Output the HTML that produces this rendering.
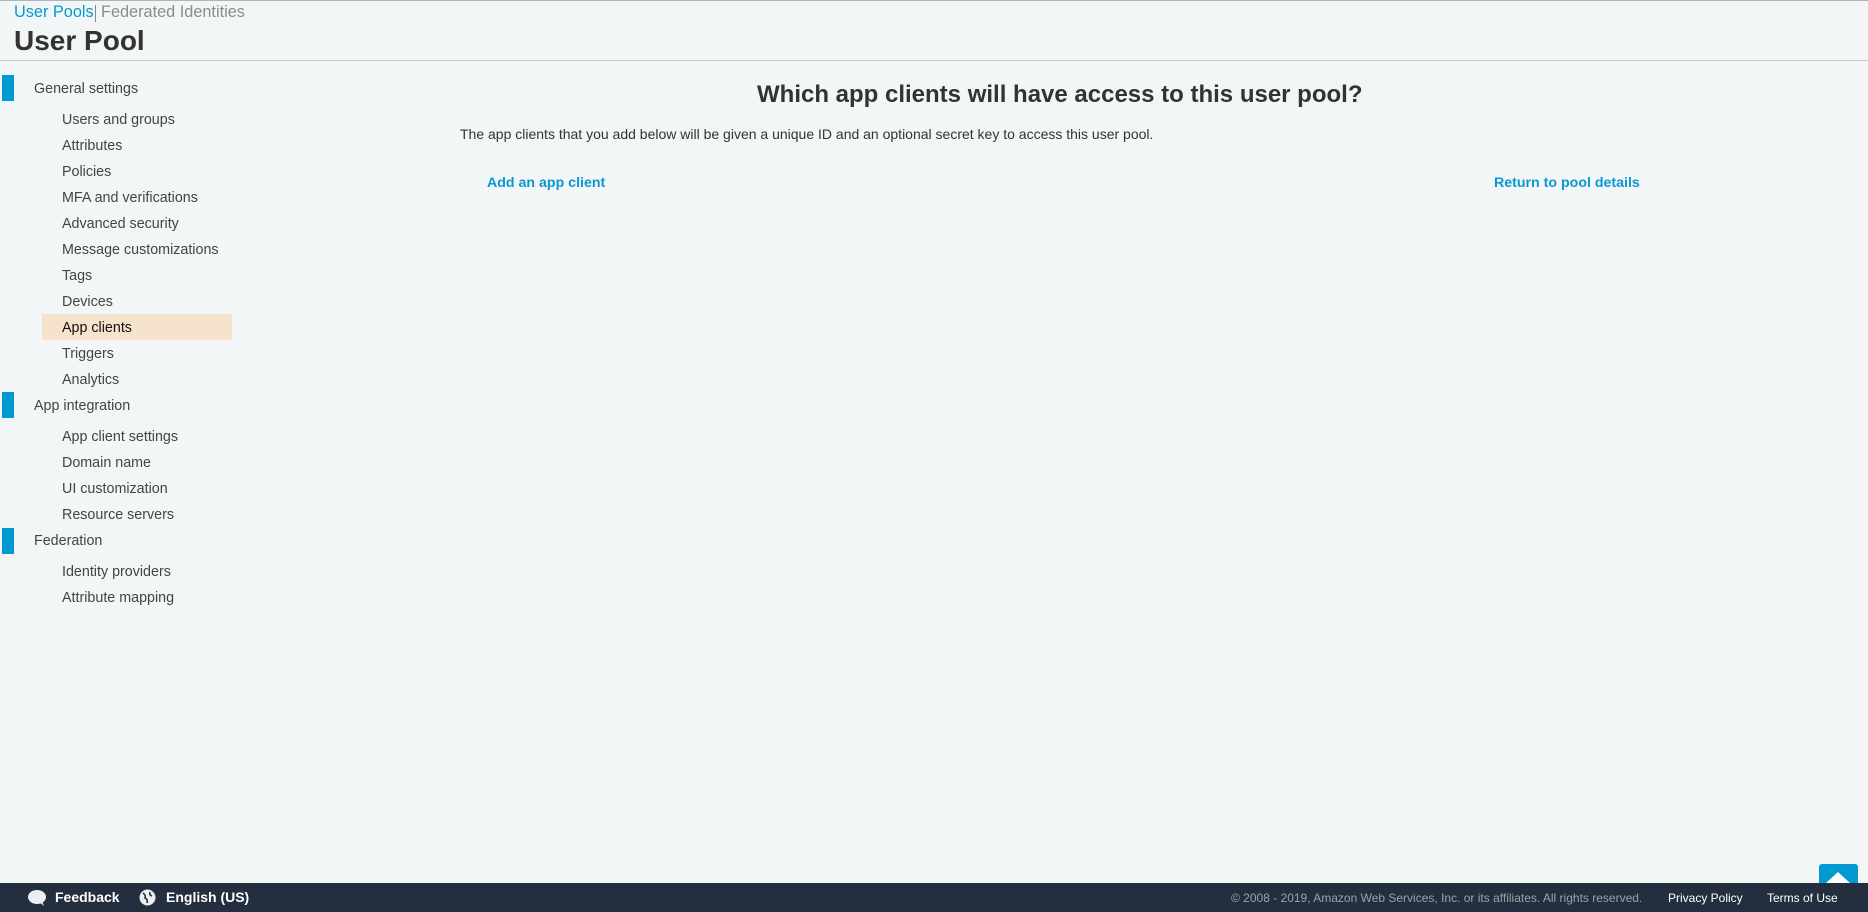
<!DOCTYPE html>
<html><head><meta charset="utf-8"><style>
*{margin:0;padding:0;box-sizing:border-box}
body{width:1868px;height:912px;background:#f2f6f7;font-family:"Liberation Sans",Arial,sans-serif;position:relative;overflow:hidden;color:#333}
.a{position:absolute;white-space:nowrap}
.top{position:absolute;left:0;top:0;width:1868px;height:1px;background:#aab7b8}
.hl{position:absolute;left:0;top:60px;width:1868px;height:1px;background:#c4c9cc}
.bar{position:absolute;left:2px;width:12px;background:#0099d2}
.grp{font-size:14.3px;color:#444;left:34px}
.sub{font-size:14.3px;color:#444;left:62px}
.lnk{font-size:14.2px;font-weight:bold;color:#0a98d0}
.foot{position:absolute;left:0;top:883px;width:1868px;height:29px;background:#232f3e}
</style></head><body>
<div class="top"></div>
<div class="a" style="left:14px;top:3px;font-size:16.3px;color:#0a98d0">User Pools</div>
<div class="a" style="left:95px;top:5px;width:1px;height:17px;background:#888"></div>
<div class="a" style="left:101px;top:3px;font-size:16.3px;color:#8c8c8c">Federated Identities</div>
<div class="a" style="left:14px;top:25px;font-size:28px;font-weight:bold;color:#333">User Pool</div>
<div class="hl"></div>

<div class="bar" style="top:75px;height:26px"></div>
<div class="a grp" style="top:81px">General settings</div>
<div class="a" style="left:42px;top:314px;width:190px;height:26px;background:#f6e3cd"></div>
<div class="a sub" style="top:112px">Users and groups</div>
<div class="a sub" style="top:138px">Attributes</div>
<div class="a sub" style="top:164px">Policies</div>
<div class="a sub" style="top:190px">MFA and verifications</div>
<div class="a sub" style="top:216px">Advanced security</div>
<div class="a sub" style="top:242px">Message customizations</div>
<div class="a sub" style="top:268px">Tags</div>
<div class="a sub" style="top:294px">Devices</div>
<div class="a sub" style="top:320px;color:#111">App clients</div>
<div class="a sub" style="top:346px">Triggers</div>
<div class="a sub" style="top:372px">Analytics</div>
<div class="bar" style="top:392px;height:26px"></div>
<div class="a grp" style="top:398px">App integration</div>
<div class="a sub" style="top:429px">App client settings</div>
<div class="a sub" style="top:455px">Domain name</div>
<div class="a sub" style="top:481px">UI customization</div>
<div class="a sub" style="top:507px">Resource servers</div>
<div class="bar" style="top:528px;height:26px"></div>
<div class="a grp" style="top:533px">Federation</div>
<div class="a sub" style="top:564px">Identity providers</div>
<div class="a sub" style="top:590px">Attribute mapping</div>

<div class="a" style="left:757px;top:81px;font-size:24px;font-weight:bold;color:#333">Which app clients will have access to this user pool?</div>
<div class="a" style="left:460px;top:126px;font-size:14px;color:#333">The app clients that you add below will be given a unique ID and an optional secret key to access this user pool.</div>
<div class="a lnk" style="left:487px;top:175px">Add an app client</div>
<div class="a lnk" style="left:1494px;top:175px">Return to pool details</div>

<div class="a" style="left:1819px;top:864px;width:39px;height:30px;background:#0099d2;border-radius:3px"></div>
<div class="a" style="left:1826px;top:872px;width:0;height:0;border-left:12px solid transparent;border-right:12px solid transparent;border-bottom:11px solid #fff"></div>
<div class="foot"></div>
<svg class="a" style="left:27px;top:889px" width="20" height="18" viewBox="0 0 20 18"><ellipse cx="10" cy="8" rx="9" ry="7" fill="#eee"/><path d="M12 13 L17 17 L15 12Z" fill="#eee"/></svg>
<div class="a" style="left:55px;top:889px;font-size:14px;font-weight:bold;color:#fff">Feedback</div>
<svg class="a" style="left:139px;top:889px" width="17" height="17" viewBox="0 0 17 17"><circle cx="8.5" cy="8.5" r="8" fill="#eee"/><path d="M4 4 Q7 6 6 9 Q9 10 8 14 M11 3 Q10 6 13 7" stroke="#232f3e" stroke-width="1.6" fill="none"/></svg>
<div class="a" style="left:166px;top:889px;font-size:14px;font-weight:bold;color:#fff">English (US)</div>
<div class="a" style="left:1231px;top:891px;font-size:12px;color:#99a3a6">© 2008 - 2019, Amazon Web Services, Inc. or its affiliates. All rights reserved.</div>
<div class="a" style="left:1668px;top:891px;font-size:12px;color:#fff">Privacy Policy</div>
<div class="a" style="left:1767px;top:891px;font-size:12px;color:#fff">Terms of Use</div>
</body></html>
